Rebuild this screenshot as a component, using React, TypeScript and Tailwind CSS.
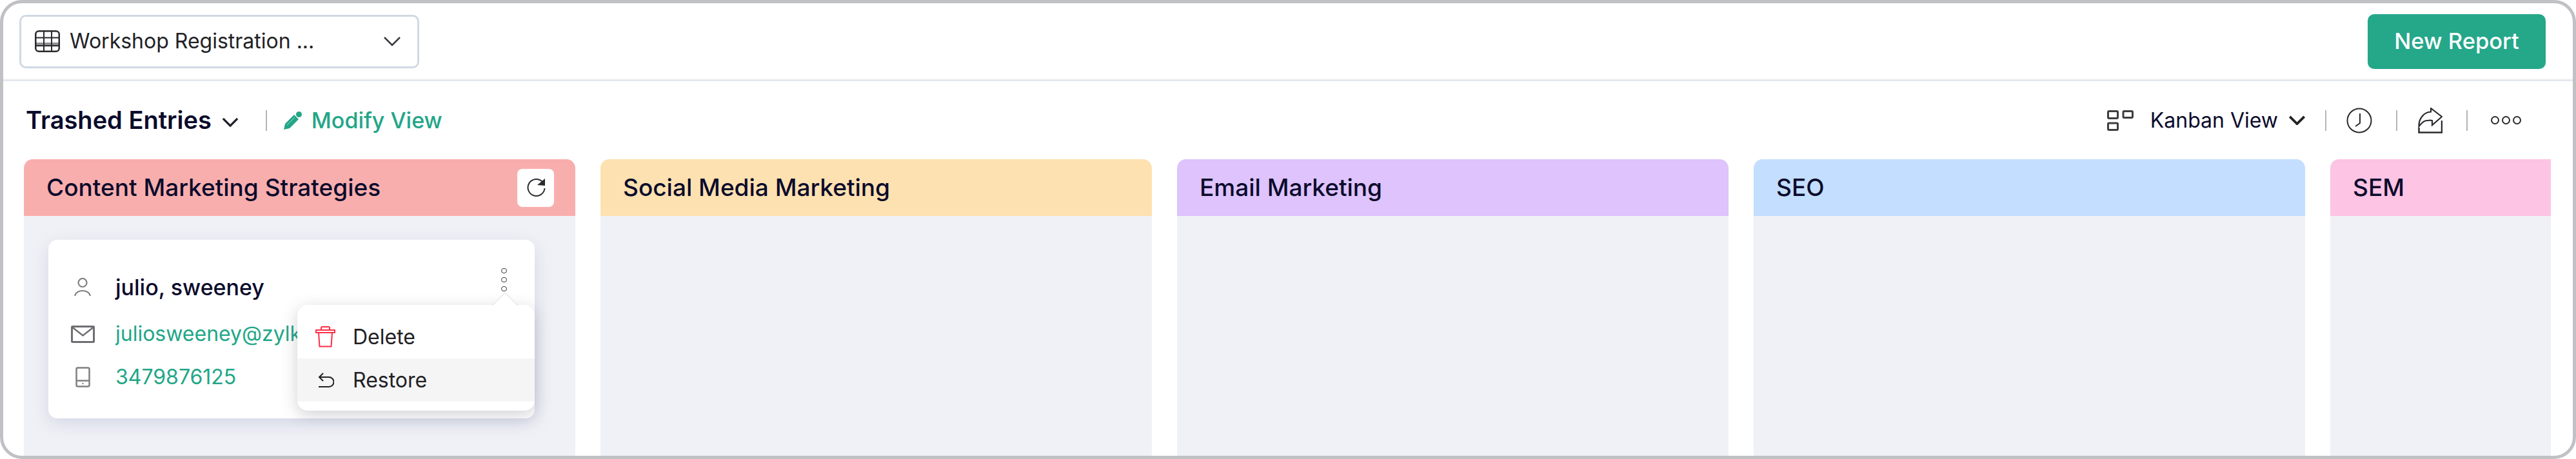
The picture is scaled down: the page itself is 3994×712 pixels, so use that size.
const columns = [
  { title: 'Content Marketing Strategies', head: 'bg-[#f9aeae]' },
  { title: 'Social Media Marketing', head: 'bg-[#fee1b0]' },
  { title: 'Email Marketing', head: 'bg-[#dec3fc]' },
  { title: 'SEO', head: 'bg-[#c4deff]' },
  { title: 'SEM', head: 'bg-[#fdc4e4]' },
];

const Chevron = ({ className = '', width = 3 }: { className?: string; width?: number }) => (
  <svg viewBox="0 0 28 16" fill="none" className={className}>
    <path d="M2 2l12 12L26 2" stroke="currentColor" strokeWidth={width} />
  </svg>
);

const TableIcon = () => (
  <svg viewBox="0 0 39 34" fill="none" className="w-[39px] h-[34px] text-[#2a2a2e]">
    <path d="M2 19h35v5H2z" fill="#8f8f94" />
    <rect x="1.25" y="1.25" width="36.5" height="31.5" rx="5" stroke="currentColor" strokeWidth="2.5" />
    <path d="M2 11.500h35M2 24h35M14 2v30M26 2v30" stroke="currentColor" strokeWidth="2" />
  </svg>
);

const Pencil = () => (
  <svg viewBox="0 0 30 30" fill="none" className="w-[30px] h-[30px] text-[#22a687]">
    <path d="M1 29l2-9L17 6l7 7-14 14z" fill="currentColor" />
    <path d="M6 22L18 10" stroke="#ffffff" strokeWidth="1" opacity="0.6" />
    <circle cx="24.500" cy="5.500" r="4.500" fill="currentColor" />
  </svg>
);

const Separator = ({ className = '' }: { className?: string }) => <div className={`w-[2px] h-[32px] bg-[#b5b5b8] ${className}`} />;

const Dots = ({ vertical = false }: { vertical?: boolean }) => (
  <div className={`flex ${vertical ? 'flex-col gap-[6px]' : 'gap-[4px]'}`}>
    {[0, 1, 2].map((i) => (
      <div key={i} className={`${vertical ? 'w-[9px] h-[8px] border-[1.5px] border-[#3a3a3e]' : 'w-[13px] h-[13px] border-2 border-[#2a2a2e]'} rounded-full`} />
    ))}
  </div>
);

const KanbanIcon = () => (
  <svg viewBox="0 0 41 32" fill="none" className="w-[41px] h-[32px] text-[#3d3d42]">
    <rect x="1.500" y="1.500" width="15" height="11" rx="1.500" stroke="currentColor" strokeWidth="3" />
    <rect x="25" y="1.500" width="14.500" height="10" rx="1.500" stroke="currentColor" strokeWidth="3" />
    <rect x="1.500" y="20" width="15" height="10.500" rx="1.500" stroke="currentColor" strokeWidth="3" />
  </svg>
);

const ClockIcon = () => (
  <svg viewBox="0 0 40 40" fill="none" className="w-[40px] h-[40px] text-[#2a2a2e]">
    <circle cx="20" cy="20" r="18.500" stroke="currentColor" strokeWidth="2" />
    <path d="M21 9v15l-7 5" stroke="currentColor" strokeWidth="2" />
  </svg>
);

const ShareIcon = () => (
  <svg viewBox="0 0 38 40" fill="none" className="w-[38px] h-[40px] text-[#2a2a2e]">
    <path d="M1.500 29C1 17 9 7 20 6.500V1l17 13-15 13v-7c-3-1-5 0-8 0-4 0-8 3-12.500 9z" stroke="currentColor" strokeWidth="2.200" strokeLinejoin="miter" />
    <path d="M1.500 31v7.500h35.500V20" stroke="currentColor" strokeWidth="2.500" />
  </svg>
);

const RefreshIcon = () => (
  <svg viewBox="0 0 31 30" fill="none" className="w-[31px] h-[30px] text-[#2a2a2e]">
    <path d="M26 6a13 13 0 1 0 3.500 10" stroke="currentColor" strokeWidth="2" />
    <path d="M18 11L30 1v11z" fill="currentColor" />
  </svg>
);

const PersonIcon = () => (
  <svg viewBox="0 0 26 28" fill="none" className="w-[26px] h-[28px] text-[#808084]">
    <circle cx="13" cy="7.500" r="6.500" stroke="currentColor" strokeWidth="2.200" />
    <path d="M1 28c1-5 6-8 12-8s11 3 12 8" stroke="currentColor" strokeWidth="2.200" />
  </svg>
);

const MailIcon = () => (
  <svg viewBox="0 0 37 27" fill="none" className="w-[37px] h-[27px] text-[#6e6e72]">
    <rect x="1.500" y="1.500" width="34" height="24" rx="1" stroke="currentColor" strokeWidth="3" />
    <path d="M2 2.500l16.500 13L35 2.500" stroke="currentColor" strokeWidth="2.500" />
  </svg>
);

const PhoneIcon = () => (
  <svg viewBox="0 0 23 32" fill="none" className="w-[23px] h-[32px] text-[#808084]">
    <rect x="1.500" y="1.500" width="20" height="29" rx="2" stroke="currentColor" strokeWidth="2.500" />
    <path d="M2 21.500h19" stroke="currentColor" strokeWidth="2.500" />
    <rect x="10.500" y="25" width="2" height="2" fill="currentColor" />
  </svg>
);

const TrashIcon = () => (
  <svg viewBox="0 0 31 33" fill="none" className="w-[31px] h-[33px] text-[#ff2d46]">
    <path d="M9 6V2.500A1.500 1.500 0 0 1 10.500 1h10A1.500 1.500 0 0 1 22 2.500V6" stroke="currentColor" strokeWidth="2" />
    <path d="M1 6h29v4H1z" stroke="currentColor" strokeWidth="2" strokeLinejoin="round" />
    <path d="M5 10l1.500 21.500h18L26 10" stroke="currentColor" strokeWidth="2" />
  </svg>
);

const UndoIcon = () => (
  <svg viewBox="0 0 25 24" fill="none" className="w-[25px] h-[24px] text-[#212124]">
    <path d="M8 1L2 7l6 6" stroke="currentColor" strokeWidth="2" />
    <path d="M2 7h15a6.500 6.500 0 0 1 0 15H1" stroke="currentColor" strokeWidth="2" />
  </svg>
);

const EntryCard = () => (
  <div className="relative ml-[38px] mt-[37px] w-[754px] h-[277px] pt-[43px] pl-[30px] pr-[43px] bg-white rounded-[14px] shadow-[0_8px_24px_rgba(160,170,200,0.35)]">
    <div className="flex items-center h-[60px]">
      <div className="w-[46px] flex justify-center"><PersonIcon /></div>
      <span className="ml-[28px] text-[34px] font-medium text-[#0b0b2b]">julio, sweeney</span>
      <div className="ml-auto mb-[22px]"><Dots vertical /></div>
    </div>
    <div className="flex items-center h-[60px] mt-[13px]">
      <div className="w-[46px] flex justify-center"><MailIcon /></div>
      <span className="ml-[28px] w-[282px] overflow-hidden whitespace-nowrap text-[32px] text-[#22a687]">juliosweeney@zylker.com</span>
    </div>
    <div className="flex items-center h-[60px] mt-[7px]">
      <div className="w-[46px] flex justify-center"><PhoneIcon /></div>
      <span className="ml-[28px] text-[32px] text-[#22a687]">3479876125</span>
    </div>

    <div className="absolute left-[386px] top-[101px] w-[368px] h-[164px] pt-[16px] bg-white rounded-[16px] shadow-[0_6px_24px_rgba(70,70,90,0.25)]">
      <svg viewBox="0 0 40 20" className="absolute left-[302px] top-[-19px] w-[40px] h-[20px]">
        <path d="M0 20L20 0l20 20z" fill="#ffffff" />
        <path d="M0 20L20 0l20 20" fill="none" stroke="#e8e8ea" strokeWidth="1.500" />
      </svg>
      <div className="flex items-center h-[67px] pl-[28px]">
        <TrashIcon />
        <span className="ml-[27px] text-[32px] text-[#212124]">Delete</span>
      </div>
      <div className="flex items-center h-[67px] pl-[32px] bg-[#f5f5f6]">
        <UndoIcon />
        <span className="ml-[29px] text-[32px] text-[#212124]">Restore</span>
      </div>
    </div>
  </div>
);

export default function App() {
  return (
    <div className="w-[3994px] h-[712px] flex flex-col bg-white border-[5px] border-[#bfc1c4] rounded-[34px] overflow-hidden font-['Inter',sans-serif]">
      <header className="shrink-0 h-[121px] flex items-center justify-between pl-[25px] pr-[42px] border-b-[3px] border-[#e4e7ec]">
        <div className="w-[620px] h-[83px] flex items-center pl-[21px] border-[3px] border-[#d0d9e4] rounded-[10px]">
          <TableIcon />
          <span className="ml-[15px] text-[32px] text-[#222226]">Workshop Registration ...</span>
          <Chevron className="ml-auto mr-[25px] w-[28px] h-[16px] text-[#3a3a40]" width={2.500} />
        </div>
        <button className="w-[276px] h-[85px] bg-[#25a78a] rounded-[10px] text-white text-[34.500px] font-medium">New Report</button>
      </header>

      <div className="shrink-0 h-[121px] flex items-center justify-between pl-[35px] pr-[80px]">
        <div className="flex items-center">
          <span className="text-[38px] font-semibold text-[#0b0b2b]">Trashed Entries</span>
          <Chevron className="ml-[16px] mt-[6px] w-[26px] h-[15px] text-[#1f1f2a]" width={3.500} />
          <Separator className="ml-[42px]" />
          <div className="ml-[25px]"><Pencil /></div>
          <span className="ml-[14px] text-[34px] font-medium text-[#22a687]">Modify View</span>
        </div>
        <div className="flex items-center">
          <KanbanIcon />
          <span className="ml-[26px] text-[32px] text-[#0b0b2b]">Kanban View</span>
          <Chevron className="ml-[16px] w-[27px] h-[15px] text-[#222226]" width={4} />
          <Separator className="ml-[30px]" />
          <div className="ml-[31px]"><ClockIcon /></div>
          <Separator className="ml-[37px]" />
          <div className="ml-[32px]"><ShareIcon /></div>
          <Separator className="ml-[37px]" />
          <div className="ml-[36px]"><Dots /></div>
        </div>
      </div>

      <div className="flex-1 min-h-0 pl-[32px] pr-[34px]">
        <div className="h-full flex gap-[39px] overflow-hidden">
          {columns.map((col, i) => (
            <div key={col.title} className="w-[855px] shrink-0 h-full bg-[#f0f1f6] rounded-t-[14px]">
              <div className={`h-[88px] flex items-center justify-between pl-[35px] pr-[33px] rounded-t-[14px] ${col.head}`}>
                <span className="text-[37px] font-medium text-[#0b0b2b]">{col.title}</span>
                {i === 0 && (
                  <div className="w-[57px] h-[59px] flex items-center justify-center bg-white rounded-[8px]">
                    <RefreshIcon />
                  </div>
                )}
              </div>
              {i === 0 && <EntryCard />}
            </div>
          ))}
        </div>
      </div>
    </div>
  );
}
